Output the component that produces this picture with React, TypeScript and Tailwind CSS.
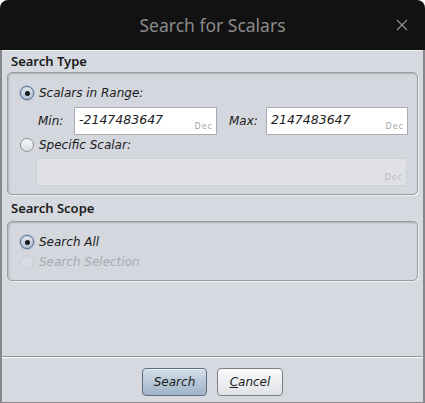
import React from "react";

function Radio({ checked, disabled }: { checked?: boolean; disabled?: boolean }) {
  return (
    <div
      className={`flex h-[14px] w-[14px] shrink-0 items-center justify-center rounded-full border ${
        disabled
          ? "border-[#c9ccd2] bg-[#d9dce2]"
          : checked
            ? "border-[#4f6a86] bg-gradient-to-b from-[#dfe6ee] to-[#b5c3d3] shadow-[0_0_0_1px_#aebfd2]"
            : "border-[#8d9096] bg-gradient-to-b from-[#f7f8fa] to-[#d9dce2]"
      }`}
    >
      {checked && <div className="h-[5px] w-[5px] rounded-full bg-[#1a1a1a]" />}
    </div>
  );
}

function NumField({ value, width, disabled }: { value?: string; width: string; disabled?: boolean }) {
  return (
    <div
      className={`relative h-[28px] ${width} border ${
        disabled ? "border-[#cfd2d8] bg-[#dfe1e6]" : "border-[#a9acb2] bg-white"
      }`}
    >
      {value && (
        <span className="absolute left-[4px] top-[3px] text-[12.5px] italic text-[#1b1b1b]">
          {value}
        </span>
      )}
      <span
        className={`absolute bottom-[1px] right-[3px] text-[8px] tracking-[1px] ${
          disabled ? "text-[#b7babf]" : "text-[#a3a6ab]"
        }`}
      >
        Dec
      </span>
    </div>
  );
}

function Group({ children, height }: { children: React.ReactNode; height: string }) {
  return (
    <div
      className={`mx-[4px] ${height} rounded-[5px] border border-[#9a9ca1] bg-[#d4d7de] shadow-[inset_1px_1px_2px_rgba(0,0,0,0.18),1px_1px_0_#eef0f3]`}
    >
      {children}
    </div>
  );
}

export default function App() {
  return (
    <div
      className="h-[403px] w-[425px] overflow-hidden bg-white text-[#1b1b1b]"
      style={{ fontFamily: '"DejaVu Sans", sans-serif' }}
    >
      <div className="flex h-full flex-col overflow-hidden rounded-t-[8px] bg-[#121212]">
        <div className="relative flex h-[50px] shrink-0 items-center justify-center">
          <span
            className="text-[17.5px] text-[#8b8b8b]"
            style={{ fontFamily: '"Noto Sans", sans-serif' }}
          >
            Search for Scalars
          </span>
          <svg
            className="absolute right-[17px] top-[19px]"
            width="12"
            height="12"
            viewBox="0 0 12 12"
            fill="none"
            stroke="#8f8f8f"
            strokeWidth="1.3"
          >
            <path d="M1 1l10 10M11 1L1 11" />
          </svg>
        </div>
        <div className="flex flex-1 flex-col border-x-[2px] border-b border-[#85878c] bg-[#d6d9e0]">
          <div className="flex-1 border-x border-t border-b border-t-[#f2f3f5] border-x-[#d6d9e0] border-b-[#8e9095]">
            <div
              className="pl-[8px] pt-[1px] text-[13px] font-semibold leading-[18px]"
              style={{ fontFamily: '"Noto Sans", sans-serif' }}
            >
              Search Type
            </div>
            <div className="mt-[2px]">
              <Group height="h-[123px]">
                <div className="flex items-center gap-[5px] pl-[12px] pt-[11px]">
                  <Radio checked />
                  <span className="text-[12px] italic">Scalars in Range:</span>
                </div>
                <div className="mt-[5px] flex items-center pl-[30px]">
                  <span className="w-[36px] text-[12px] italic">Min:</span>
                  <NumField value="-2147483647" width="w-[143px]" />
                  <span className="ml-[12px] w-[37px] text-[12px] italic">Max:</span>
                  <NumField value="2147483647" width="w-[142px]" />
                </div>
                <div className="mt-[1px] flex items-center gap-[5px] pl-[12px]">
                  <Radio />
                  <span className="text-[12px] italic">Specific Scalar:</span>
                </div>
                <div className="mt-[4px] pl-[28px]">
                  <NumField width="w-[371px]" disabled />
                </div>
              </Group>
            </div>
            <div
              className="mt-[4px] pl-[8px] text-[13px] font-semibold leading-[18px]"
              style={{ fontFamily: '"Noto Sans", sans-serif' }}
            >
              Search Scope
            </div>
            <div className="mt-[4px]">
              <Group height="h-[60px]">
                <div className="flex items-center gap-[5px] pl-[12px] pt-[11px]">
                  <Radio checked />
                  <span className="text-[12px] italic">Search All</span>
                </div>
                <div className="mt-[2px] flex items-center gap-[5px] pl-[12px]">
                  <Radio disabled />
                  <span className="text-[12px] italic text-[#a7aab0]">Search Selection</span>
                </div>
              </Group>
            </div>
          </div>
          <div className="flex h-[45px] shrink-0 items-start justify-center gap-[10px] border-t border-white pt-[10px]">
            <button className="h-[28px] w-[65px] rounded-[4px] border border-[#5e6d7f] bg-gradient-to-b from-[#d2dde8] to-[#9fb3c8] text-[12px] italic shadow-[inset_0_1px_0_#eef3f8]">
              Search
            </button>
            <button className="h-[28px] w-[66px] rounded-[4px] border border-[#7c7f85] bg-gradient-to-b from-[#fbfbfc] to-[#dfe1e5] text-[12px] italic">
              <span className="underline">C</span>ancel
            </button>
          </div>
        </div>
      </div>
    </div>
  );
}
